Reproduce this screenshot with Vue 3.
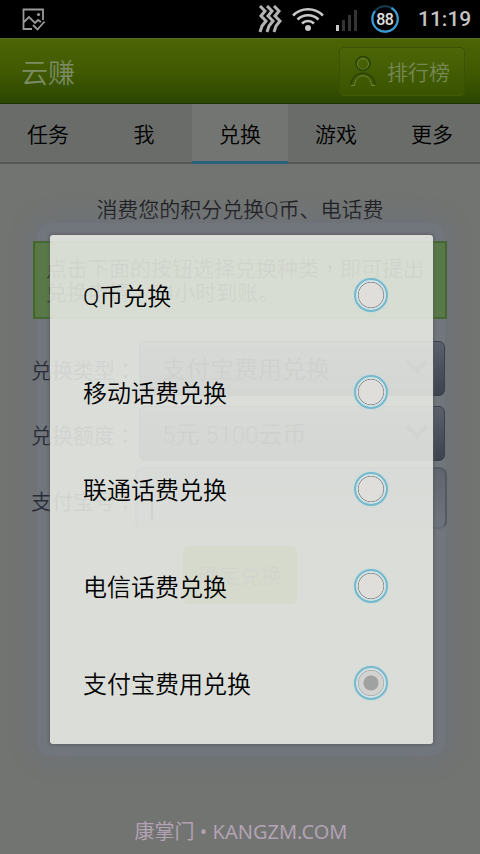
<script setup>
const tabs = ['任务', '我', '兑换', '游戏', '更多']
const options = ['Q币兑换', '移动话费兑换', '联通话费兑换', '电信话费兑换', '支付宝费用兑换']
const fields = [
  { label: '兑换类型', value: '支付宝费用兑换' },
  { label: '兑换额度', value: '5元 5100云币' },
]
</script>

<template>
  <div class="screen">
    <div class="status">
      <svg class="shot" width="24" height="24" viewBox="0 0 24 24" fill="none" stroke="#999" stroke-width="1.8">
        <path d="M21 12V1.500H1.500V21H10M2 14l5-5 6 6 3-3 3 2M11 17l4.500 4.500 7-8" /><circle cx="16.500" cy="6.500" r="1.600" fill="#999" stroke="none" />
      </svg>
      <div class="sys">
        <svg class="vib" width="24" height="28" viewBox="0 0 24 28" fill="none" stroke="#b4b4b4" stroke-width="3">
          <path d="M2 1l5 5-4 5 5 5-4 5-2 6M9 1l5 5-4 5 5 5-4 5-2 6M16 1l5 5-4 5 5 5-4 5-2 6" />
        </svg>
        <svg class="wifi" width="34" height="26" viewBox="0 0 34 26" fill="none" stroke="#c8c8c8" stroke-width="2.6">
          <path d="M2 9.500a21 21 0 0 1 30 0M6.500 13.500a15 15 0 0 1 21 0M11 17.500a8.500 8.500 0 0 1 12 0" /><circle cx="17" cy="22" r="3" fill="#c8c8c8" stroke="none" />
        </svg>
        <svg class="signal" width="22" height="22" viewBox="0 0 22 22">
          <path d="M0 15h3v6H0z" fill="#c8c8c8" /><path d="M6 10h3v11H6zM12 5h3v16h-3zM18 0h3v21h-3z" fill="#343434" />
        </svg>
        <svg class="battery" width="30" height="30" viewBox="0 0 30 30" fill="none">
          <circle cx="15" cy="15" r="12.700" stroke="#173c50" stroke-width="2" />
          <path d="M21.500 4A12.700 12.700 0 1 1 5 7.200" stroke="#3b9bd0" stroke-width="2.200" />
          <text x="14.700" y="20.500" text-anchor="middle" class="pct">88</text>
        </svg>
        <span class="clock">11:19</span>
      </div>
    </div>
    <header class="bar">
      <span class="title">云赚</span>
      <div class="rank">
        <svg width="28" height="32" viewBox="0 0 28 32" fill="none">
          <g stroke="#6c8435" stroke-width="1"><circle cx="14" cy="9" r="5.500" /><path d="M2 30.500h3.500c1-13 16-13 17 0H26" /></g>
          <g stroke="#294306" stroke-width="1.500"><circle cx="14" cy="8.500" r="7" /><path d="M2 29.500c1-15 23-15 24 0" /></g>
        </svg>
        <span>排行榜</span>
      </div>
    </header>
    <nav class="tabs">
      <div v-for="(t, i) in tabs" :key="t" class="tab" :class="{ on: i === 2 }">{{ t }}</div>
    </nav>
    <main class="page">
      <p class="lead">消费您的积分兑换Q币、电话费</p>
      <div class="notice">点击下面的按钮选择兑换种类<span class="mid" lang="zh-TW">，</span>即可提出<br>兑换申请<span class="mid" lang="zh-TW">，</span>24小时到账。</div>
      <div v-for="f in fields" :key="f.label" class="field">
        <span class="label">{{ f.label }}<span class="mid" lang="zh-TW">：</span></span>
        <div class="spinner">
          <span>{{ f.value }}</span>
          <svg width="24" height="16" viewBox="0 0 24 16" fill="none" stroke="#1c1e20" stroke-width="4.500"><path d="M2 2l10 10L22 2" /></svg>
        </div>
      </div>
      <div class="field account">
        <span class="label">支付宝号<span class="mid" lang="zh-TW">：</span></span>
        <div class="input"><i class="caret"></i></div>
      </div>
      <div class="submit">确定兑换</div>
    </main>
    <div class="glow"></div>
    <div class="dialog">
      <div v-for="(o, i) in options" :key="o" class="option">
        <span>{{ o }}</span>
        <i class="radio" :class="{ checked: i === 4 }"></i>
      </div>
    </div>
    <div class="mark">康掌门 <span class="dot">•</span> KANGZM.COM</div>
  </div>
</template>

<style>
body { margin: 0; background: #727472; }
</style>

<style scoped>
.screen { position: relative; width: 480px; height: 854px; overflow: hidden; background: #727472; font-family: Roboto, "Noto Sans CJK SC", sans-serif; color: #000; font-weight: 350; white-space: nowrap; }
.mid { font-family: "Noto Sans CJK TC", sans-serif; line-height: 0; }
.status { height: 38px; background: #000; display: flex; justify-content: space-between; align-items: center; padding: 0 9px 0 22px; box-sizing: border-box; }
.shot { margin-top: 1px; }
.sys { display: flex; align-items: center; }
.vib { margin-right: 9px; }
.wifi { margin-right: 11px; }
.signal { margin: 3px 12px 0 0; }
.battery { margin-right: 18px; }
.pct { font: 500 16px Roboto, sans-serif; fill: #e0e0e0; letter-spacing: -.7px; }
.clock { font-size: 21px; font-weight: 500; color: #c4c4c4; width: 53px; text-align: right; }
.bar { height: 66px; box-sizing: border-box; padding: 0 15px 0 21px; display: flex; align-items: center; justify-content: space-between; background: linear-gradient(#4d6405, #415a02 50%, #2b4700); border-top: 1px solid #596c25; border-bottom: 1px solid #1c3202; }
.title { font-size: 27px; color: #7b8b62; }
.rank { width: 126px; height: 49px; box-sizing: border-box; border-radius: 5px; border: 1px solid #3b5207; border-bottom-color: #425b08; background: linear-gradient(#4d6607, #395301); display: flex; align-items: center; padding-left: 9px; gap: 10px; color: #768852; font-size: 21px; }
.tabs { height: 60px; box-sizing: border-box; display: grid; grid-template-columns: repeat(5, 1fr); background: #6a6c69; border-bottom: 2px solid #565856; }
.tab { font-size: 21px; height: 60px; box-sizing: border-box; line-height: 62px; text-align: center; }
.tab.on { background: #737572; border-bottom: 3px solid #2b617a; }
.page { padding: 30px 33px 0; }
.lead { margin: 0; font-size: 21px; line-height: 32px; text-align: center; color: #1e2023; }
.notice { margin-top: 15px; height: 78px; box-sizing: border-box; border: 2px solid #3c6416; background: #54782f; padding: 14px 10px 0 11px; font-size: 21px; line-height: 24px; color: #101500; }
.field { display: flex; align-items: center; height: 55px; margin: 22px -1px 0 -2px; }
.field + .field { margin-top: 10px; }
.label { width: 108px; font-size: 21px; color: #15171c; }
.spinner { width: 306px; height: 55px; box-sizing: border-box; border: 1px solid #2c3034; border-radius: 6px; background: linear-gradient(#56595c, #2f3338); padding: 0 15px 3px 22px; display: flex; justify-content: space-between; align-items: center; font-size: 24px; color: #000; }
.field.account { margin-top: 6px; height: 62px; }
.account .label { width: 104px; padding-top: 4px; }
.input { width: 312px; height: 62px; box-sizing: border-box; border: 2px solid #505356; border-bottom-color: #62666b; border-radius: 8px; background: linear-gradient(#5c5f61, #6f7273); padding: 24px 14px; }
.caret { display: block; width: 2px; height: 26px; background: #000; }
.submit { margin: 17px auto 0; width: 114px; height: 58px; line-height: 60px; border-radius: 6px; background: #4f5c05; color: #1c2000; font-size: 21px; text-align: center; }
.glow { position: absolute; left: 37px; top: 223px; width: 408px; height: 533px; border-radius: 14px; background: rgba(109, 125, 160, .22); box-shadow: 0 0 24px 1px rgba(105, 113, 140, .45); }
.dialog { position: absolute; left: 50px; top: 235px; width: 383px; height: 509px; box-sizing: border-box; padding: 11px 45px 12px 33px; border-radius: 3px; background: rgba(233, 235, 230, .875); box-shadow: 0 0 3px 1px rgba(85, 88, 88, .7); }
.option { height: 97px; display: flex; align-items: center; justify-content: space-between; font-size: 24px; }
.option span { margin-top: -1px; }
.radio { width: 34px; height: 34px; box-sizing: border-box; border: 2px solid #74b9cc; border-radius: 50%; box-shadow: 0 0 2px #b5dce5; background: radial-gradient(circle, #dfdedb 0 12px, #8a8a8a 12.700px, #d2e1e4 13.500px); }
.radio.checked { background: radial-gradient(circle, #a0a2a1 0 7px, #d2d2d0 8px 12px, #aaa 12.700px, #d2e1e4 13.500px); }
.mark { position: absolute; left: 1px; width: 480px; top: 819px; line-height: 26px; text-align: center; color: #b2a2b2; font-family: "Noto Sans", "Noto Sans CJK SC", sans-serif; font-size: 20px; font-weight: 400; }
.dot { font-family: "Open Sans", sans-serif; }
</style>
